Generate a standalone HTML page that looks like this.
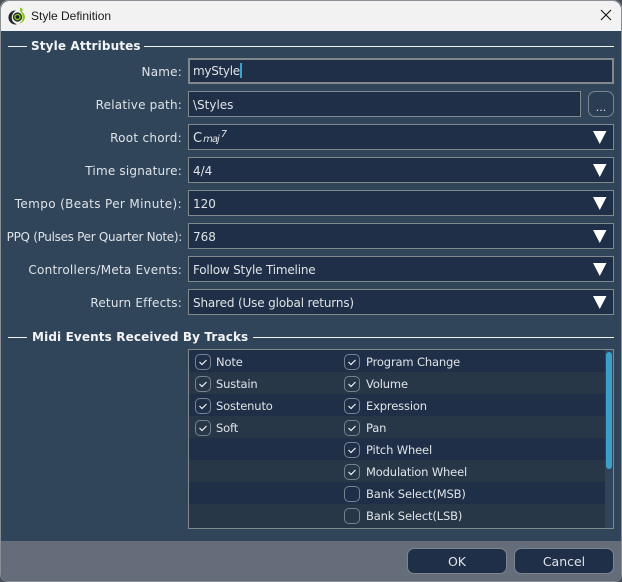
<!DOCTYPE html>
<html><head><meta charset="utf-8">
<style>
html,body{margin:0;padding:0}
body{width:622px;height:582px;position:relative;overflow:hidden;background:#4a5058;font-family:"DejaVu Sans",sans-serif;font-size:12px;color:#dfe3e7}
div{position:absolute;box-sizing:border-box;white-space:nowrap}
#win{left:0;top:0;width:622px;height:582px;background:#30455a;border:1px solid #8b9096;border-radius:8px;overflow:hidden}
#tb{left:1px;top:1px;width:620px;height:30px;background:#f2f2f2;color:#1a1a1a;font:12px/30px "Liberation Sans",sans-serif;border-radius:8px 8px 0 0;padding-left:30px}
#ft{left:1px;top:541px;width:620px;height:40px;background:#666d7a;border-radius:0 0 8px 8px}
.lb{left:0;width:182px;text-align:right;height:28px;line-height:28px}
.f{left:188px;width:426px;height:26px;background:#1f2f47;border:1px solid #82898c;line-height:26px;padding-left:4px}
.h{font-weight:bold;color:#f2f4f6;font-size:12px;letter-spacing:.13px;line-height:16px;left:31px}
.l{height:1px;background:#f0f2f4}
.r{left:189px;width:416px;height:22px}
.c{width:16px;height:16px;border:1px solid #76838f;border-radius:5px}
.t{line-height:22px;height:22px;font-size:11.5px;letter-spacing:-.15px}
.b{height:26px;background:#1f2f47;border:1px solid #7b8590;border-radius:7px;text-align:center;line-height:26px;font-size:12.5px}
</style></head><body>
<div id="win"></div>
<div id="tb">Style Definition</div>
<svg style="position:absolute;left:8px;top:6px" width="18" height="19" viewBox="0 0 18 19"><path d="M8 4.500a7 7 0 1 0 1 13.800C5 17 3.500 14 3.800 11 4 8 6 5.500 8 4.500z" fill="#20262c"/><path d="M12 4.800a6.500 6.500 0 0 1-1.500 12.800c3.500-1.500 4.500-4 4-7-.3-2.400-1.300-4.400-2.500-5.800z" fill="#8cc420"/><circle cx="9.500" cy="11" r="4.600" fill="#1d2722"/><circle cx="9.500" cy="11" r="2.600" fill="none" stroke="#8cc420" stroke-width="1.400"/><path d="M12 1.500v4.500c2-.3 3.200-1.800 2.300-3.300z" fill="#8cc420"/></svg>
<svg style="position:absolute;left:600px;top:9px" width="12" height="12" viewBox="0 0 12 12"><path d="M1 1L11 11M11 1L1 11" stroke="#111" stroke-width="1.1"/></svg>
<div id="ft"></div>

<div class="l" style="left:8px;top:46px;width:19px"></div>
<div class="h" style="top:38px">Style Attributes</div>
<div class="l" style="left:144px;top:46px;width:470px"></div>

<div class="lb" style="top:58px;letter-spacing:.2px">Name:</div>
<div class="f" style="top:58px;border-width:2px;line-height:23px;padding-left:3px;letter-spacing:-.3px">myStyle<span style="display:inline-block;width:2px;height:15px;background:#3ba3cf;vertical-align:-3px"></span></div>

<div class="lb" style="top:91px;letter-spacing:.2px">Relative path:</div>
<div class="f" style="top:91px;width:393px">\Styles</div>
<div class="b" style="left:588px;top:91px;width:26px;line-height:32px;font-size:11px;background:#2b3d52">...</div>

<div class="lb" style="top:124px;letter-spacing:.27px">Root chord:</div>
<div class="f" style="top:124px"><span style="font-size:13px">C</span><span style="font-style:italic;font-size:10px;letter-spacing:-1px;margin-left:1px">maj</span><sup style="font-style:italic;font-size:10px;line-height:0;margin-left:2px">7</sup></div>
<div class="lb" style="top:157px;letter-spacing:.2px">Time signature:</div>
<div class="f" style="top:157px">4/4</div>
<div class="lb" style="top:190px;letter-spacing:.36px">Tempo (Beats Per Minute):</div>
<div class="f" style="top:190px">120</div>
<div class="lb" style="top:223px;letter-spacing:-.3px">PPQ (Pulses Per Quarter Note):</div>
<div class="f" style="top:223px">768</div>
<div class="lb" style="top:256px;letter-spacing:.25px">Controllers/Meta Events:</div>
<div class="f" style="top:256px;letter-spacing:-.19px">Follow Style Timeline</div>
<div class="lb" style="top:289px;letter-spacing:.2px">Return Effects:</div>
<div class="f" style="top:289px;letter-spacing:-.15px">Shared (Use global returns)</div>

<svg style="position:absolute;left:0;top:0" width="622" height="582"><g fill="#fff"><path d="M593 131h13.500l-6.750 13z"/><path d="M593 164h13.500l-6.750 13z"/><path d="M593 197h13.500l-6.750 13z"/><path d="M593 230h13.500l-6.750 13z"/><path d="M593 263h13.500l-6.750 13z"/><path d="M593 296h13.500l-6.750 13z"/></g></svg>

<div class="l" style="left:8px;top:337px;width:19px"></div>
<div class="h" style="top:329px;left:32px">Midi Events Received By Tracks</div>
<div class="l" style="left:253px;top:337px;width:361px"></div>

<div style="left:188px;top:349px;width:426px;height:180px;border:1px solid #82898c;background:#30455a"></div>
<div class="r" style="top:350px;background:#1f2f47"></div>
<div class="r" style="top:372px;background:#283748"></div>
<div class="r" style="top:394px;background:#1f2f47"></div>
<div class="r" style="top:416px;background:#283748"></div>
<div class="r" style="top:438px;background:#1f2f47"></div>
<div class="r" style="top:460px;background:#283748"></div>
<div class="r" style="top:482px;background:#1f2f47"></div>
<div class="r" style="top:504px;background:#283748;height:24px"></div>
<div style="left:606px;top:352px;width:6px;height:117px;background:#3a9fc9;border-radius:3px"></div>

<div class="c" style="left:195px;top:354px"></div><div class="t" style="left:216px;top:351px">Note</div>
<div class="c" style="left:195px;top:376px"></div><div class="t" style="left:216px;top:373px">Sustain</div>
<div class="c" style="left:195px;top:398px"></div><div class="t" style="left:216px;top:395px">Sostenuto</div>
<div class="c" style="left:195px;top:420px"></div><div class="t" style="left:216px;top:417px">Soft</div>

<div class="c" style="left:344px;top:354px"></div><div class="t" style="left:366px;top:351px">Program Change</div>
<div class="c" style="left:344px;top:376px"></div><div class="t" style="left:366px;top:373px">Volume</div>
<div class="c" style="left:344px;top:398px"></div><div class="t" style="left:366px;top:395px">Expression</div>
<div class="c" style="left:344px;top:420px"></div><div class="t" style="left:366px;top:417px">Pan</div>
<div class="c" style="left:344px;top:442px"></div><div class="t" style="left:366px;top:439px">Pitch Wheel</div>
<div class="c" style="left:344px;top:464px"></div><div class="t" style="left:366px;top:461px">Modulation Wheel</div>
<div class="c" style="left:344px;top:486px"></div><div class="t" style="left:366px;top:483px">Bank Select(MSB)</div>
<div class="c" style="left:344px;top:508px"></div><div class="t" style="left:366px;top:505px">Bank Select(LSB)</div>

<svg style="position:absolute;left:0;top:0" width="622" height="582"><g fill="none" stroke="#f2f4f6" stroke-width="1.200"><path d="M199.500 362l2.500 2.500 4.500-4.500"/><path d="M199.500 384l2.500 2.500 4.500-4.500"/><path d="M199.500 406l2.500 2.500 4.500-4.500"/><path d="M199.500 428l2.500 2.500 4.500-4.500"/><path d="M348.500 362l2.500 2.500 4.500-4.500"/><path d="M348.500 384l2.500 2.500 4.500-4.500"/><path d="M348.500 406l2.500 2.500 4.500-4.500"/><path d="M348.500 428l2.500 2.500 4.500-4.500"/><path d="M348.500 450l2.500 2.500 4.500-4.500"/><path d="M348.500 472l2.500 2.500 4.500-4.500"/></g></svg>

<div class="b" style="left:407px;top:548px;width:100px">OK</div>
<div class="b" style="left:514px;top:548px;width:100px">Cancel</div>
</body></html>
